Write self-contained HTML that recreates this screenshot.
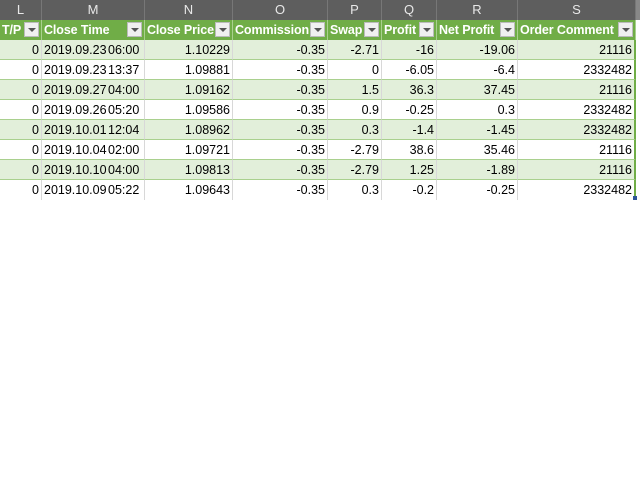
<!DOCTYPE html><html><head><style>
body{margin:0;width:640px;height:480px;background:#fff;font-family:"Liberation Sans",sans-serif;position:relative;overflow:hidden}
.d{position:absolute;box-sizing:border-box;white-space:nowrap;overflow:hidden}
.h{top:0;height:20px;background:#5e5e5e;color:#e8e8e8;font-size:13px;text-align:center;line-height:20px;border-right:1px solid #777}
.g{top:20px;height:20px;background:#70ad47;color:#fff;font-weight:bold;font-size:12.5px;line-height:20px;padding-left:2px;letter-spacing:-0.1px}
.f{position:absolute;right:2px;top:2px;width:15px;height:15px;background:#f0f0f0;border:1px solid #bbb;box-sizing:border-box}
.f:after{content:"";position:absolute;left:3px;top:5px;border-left:4px solid transparent;border-right:4px solid transparent;border-top:4px solid #555}
.c{height:20px;font-size:12.5px;line-height:20px;text-align:right;padding-right:2px;color:#000;border-right:1px solid #d8d8d8;border-bottom:1px solid #a9d08e}
</style></head><body>
<div class="d h" style="left:0;width:636px;background:#5e5e5e"></div>
<div class="d h" style="left:636px;width:4px;background:#888;border:none"></div>
<div id="t"></div>
<script>
var cols=[[0,42,"L","T/P"],[42,145,"M","Close Time"],[145,233,"N","Close Price"],[233,328,"O","Commission"],[328,382,"P","Swap"],[382,437,"Q","Profit"],[437,518,"R","Net Profit"],[518,636,"S","Order Comment"]];
var rows=[["0","2019.09.23","06:00","1.10229","-0.35","-2.71","-16","-19.06","21116"],
["0","2019.09.23","13:37","1.09881","-0.35","0","-6.05","-6.4","2332482"],
["0","2019.09.27","04:00","1.09162","-0.35","1.5","36.3","37.45","21116"],
["0","2019.09.26","05:20","1.09586","-0.35","0.9","-0.25","0.3","2332482"],
["0","2019.10.01","12:04","1.08962","-0.35","0.3","-1.4","-1.45","2332482"],
["0","2019.10.04","02:00","1.09721","-0.35","-2.79","38.6","35.46","21116"],
["0","2019.10.10","04:00","1.09813","-0.35","-2.79","1.25","-1.89","21116"],
["0","2019.10.09","05:22","1.09643","-0.35","0.3","-0.2","-0.25","2332482"]];
var h="";
cols.forEach(function(c){var w=c[1]-c[0];
h+='<div class="d h" style="left:'+c[0]+'px;width:'+w+'px">'+c[2]+'</div>';
h+='<div class="d g" style="left:'+c[0]+'px;width:'+w+'px;border-right:1px solid #a9d08e">'+c[3]+'<span class="f"></span></div>';});
rows.forEach(function(r,i){var y=40+i*20,bg=i%2==0?"#e2efda":"#fff";
var vals=[r[0],null,r[3],r[4],r[5],r[6],r[7],r[8]];
var bb=i==7?'border-bottom:none;':'';
cols.forEach(function(c,j){var w=c[1]-c[0];var br=j==7?'border-right:2px solid #70ad47;':'';
if(j==1){h+='<div class="d c" style="left:'+c[0]+'px;top:'+y+'px;width:'+w+'px;background:'+bg+';text-align:left;padding-left:2px;'+bb+'"><span style="display:inline-block;width:63px;overflow:hidden;vertical-align:top">'+r[1]+'</span><span style="position:absolute;left:66px">'+r[2]+'</span></div>';}
else h+='<div class="d c" style="left:'+c[0]+'px;top:'+y+'px;width:'+w+'px;background:'+bg+';'+br+bb+'">'+vals[j]+'</div>';});});
h+='<div class="d" style="left:633px;top:196px;width:4px;height:4px;background:#2f5597"></div>';
document.getElementById("t").innerHTML=h;
</script>
</body></html>
